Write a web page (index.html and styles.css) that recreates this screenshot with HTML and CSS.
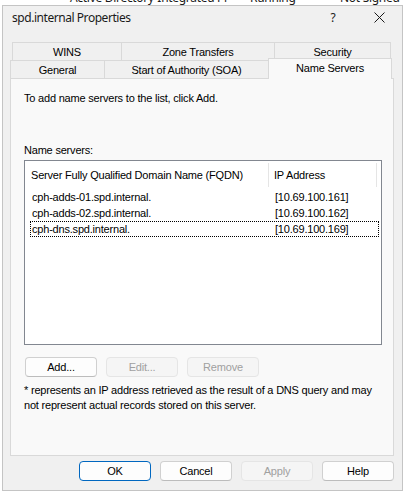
FILE: index.html
```html
<!DOCTYPE html>
<html lang="en">
<head>
    <meta charset="UTF-8">
    <title>spd.internal Properties</title>
    <link rel="stylesheet" href="styles.css">
</head>
<body>
    <div class="behind">
        <div class="behind-row">
            <span>Active Directory-Integrated Pr</span>
            <span>Running</span>
            <span>Not Signed</span>
        </div>
    </div>

    <div class="window">
        <div class="titlebar">
            <div class="title">spd.internal Properties</div>
            <div class="help-btn">?</div>
            <div class="close-btn">
                <svg width="11" height="11" viewBox="0 0 11 11">
                    <path d="M0.5 0.5 L10.5 10.5 M10.5 0.5 L0.5 10.5" stroke="#1a1a1a" stroke-width="1" fill="none"/>
                </svg>
            </div>
        </div>

        <div class="tabs">
            <div class="tab-row back-row">
                <div class="tab tab-wins">WINS</div>
                <div class="tab tab-zone">Zone Transfers</div>
                <div class="tab tab-security">Security</div>
            </div>
            <div class="tab-row front-row">
                <div class="tab tab-general">General</div>
                <div class="tab tab-soa">Start of Authority (SOA)</div>
                <div class="tab tab-ns active">Name Servers</div>
            </div>
        </div>

        <div class="pane">
            <p class="intro">To add name servers to the list, click Add.</p>
            <p class="list-label">Name servers:</p>

            <div class="listview">
                <div class="list-header">
                    <div class="col-head col-fqdn">Server Fully Qualified Domain Name (FQDN)</div>
                    <div class="col-head col-ip">IP Address</div>
                </div>
                <div class="list-row">
                    <span>cph-adds-01.spd.internal.</span>
                    <span>[10.69.100.161]</span>
                </div>
                <div class="list-row">
                    <span>cph-adds-02.spd.internal.</span>
                    <span>[10.69.100.162]</span>
                </div>
                <div class="list-row focused">
                    <span>cph-dns.spd.internal.</span>
                    <span>[10.69.100.169]</span>
                </div>
            </div>

            <div class="list-buttons">
                <button class="btn">Add...</button>
                <button class="btn" disabled>Edit...</button>
                <button class="btn" disabled>Remove</button>
            </div>

            <p class="note">* represents an IP address retrieved as the result of a DNS query and may not represent actual records stored on this server.</p>
        </div>

        <div class="dialog-buttons">
            <button class="btn btn-default">OK</button>
            <button class="btn">Cancel</button>
            <button class="btn" disabled>Apply</button>
            <button class="btn">Help</button>
        </div>
    </div>
</body>
</html>
```

FILE: styles.css
```css
* {
    margin: 0;
    padding: 0;
    box-sizing: border-box;
}

body {
    background: #ffffff;
    font-family: 'Liberation Sans', Arial, sans-serif;
    font-size: 11px;
    letter-spacing: -0.2px;
    color: #000;
}

/* window behind the dialog, only its lowest pixels show */
.behind {
    height: 5px;
    overflow: hidden;
}

.behind-row {
    display: grid;
    grid-template-columns: 180px 90px auto;
    padding-left: 70px;
    margin-top: -9px;
    font-family: 'Noto Sans', sans-serif;
    font-size: 12px;
    line-height: 14px;
    letter-spacing: -0.3px;
    color: #1a1a1a;
}

.window {
    margin-left: 2px;
    width: 401px;
    height: 486px;
    border: 1px solid #c4c4c4;
    background: #f0f0f0;
    padding: 0 8px 0 7px;
}

.titlebar {
    height: 22px;
    display: flex;
    align-items: center;
    padding-left: 2px;
}

.title {
    flex: 1;
    font-family: 'Noto Sans', sans-serif;
    font-size: 12px;
    letter-spacing: -0.45px;
    color: #1a1a1a;
}

.help-btn {
    width: 12px;
    text-align: center;
    font-family: 'Noto Sans', sans-serif;
    font-size: 12px;
    color: #1a1a1a;
    margin-right: 35px;
}

.close-btn {
    display: flex;
    margin-right: 9px;
}

/* tabs */
.tabs {
    margin-top: 14px;
}

.tab-row {
    display: flex;
    height: 18px;
    align-items: flex-start;
}

.back-row {
    padding-left: 2px;
}

.tab {
    height: 18px;
    border: 1px solid #d9d9d9;
    border-bottom: none;
    margin-right: -1px;
    display: flex;
    align-items: center;
    justify-content: center;
    background: #f0f0f0;
    color: #000;
}

.tab-wins { width: 110px; }
.tab-zone { width: 154px; }
.tab-security { width: 117px; }
.tab-general { width: 95px; }
.tab-soa { width: 165px; }
.tab-ns { width: 124px; }

.tab.active {
    height: 21px;
    margin-top: -2px;
    margin-right: 0;
    background: #f9f9f9;
    position: relative;
    z-index: 1;
    padding-bottom: 2px;
}

/* tab page */
.pane {
    height: 378px;
    border: 1px solid #d9d9d9;
    background: #f9f9f9;
    padding: 12px 10px 0 13px;
}

.intro,
.list-label {
    line-height: 14px;
}

.list-label {
    margin-top: 38px;
}

.listview {
    margin-top: 3px;
    width: 358px;
    height: 185px;
    border: 1px solid #828790;
    background: #ffffff;
}

.list-header {
    display: flex;
    height: 26px;
    padding-top: 2px;
}

.col-head {
    display: flex;
    align-items: center;
    border-right: 1px solid #e5e5e5;
}

.col-fqdn {
    width: 244px;
    padding-left: 6px;
}

.col-ip {
    width: 108px;
    padding-left: 5px;
}

.list-row {
    display: grid;
    grid-template-columns: 243px auto;
    margin: 0 0 0 5px;
    width: 349px;
    height: 16px;
    line-height: 14px;
    padding-left: 1px;
    border: 1px solid transparent;
}

.list-header + .list-row {
    margin-top: 2px;
}

.list-row.focused {
    border: 1px dotted #000;
}

/* buttons */
.btn {
    width: 72px;
    height: 20px;
    font-family: 'Liberation Sans', Arial, sans-serif;
    font-size: 11px;
    letter-spacing: -0.2px;
    color: #000;
    background: #fdfdfd;
    border: 1px solid #d0d0d0;
    border-bottom-color: #bcbcbc;
    border-radius: 4px;
}

.btn:disabled {
    color: #a0a0a0;
    background: #f5f5f5;
    border-color: #e5e5e5;
}

.btn-default {
    border: 1px solid #0067c0;
}

.list-buttons {
    display: flex;
    gap: 9px;
    margin-top: 12px;
    padding-left: 1px;
}

.note {
    margin-top: 6px;
    line-height: 15px;
}

.dialog-buttons {
    display: flex;
    gap: 9px;
    justify-content: flex-end;
    margin-top: 5px;
}
```
